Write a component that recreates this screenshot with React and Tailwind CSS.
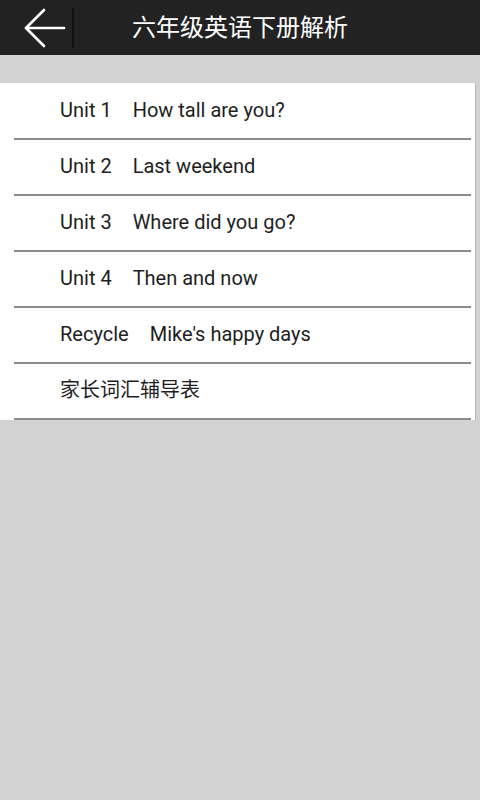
import React from 'react'

const items = [
  { unit: 'Unit 1', title: 'How tall are you?' },
  { unit: 'Unit 2', title: 'Last weekend' },
  { unit: 'Unit 3', title: 'Where did you go?' },
  { unit: 'Unit 4', title: 'Then and now' },
  { unit: 'Recycle', title: "Mike's happy days" },
  { unit: '家长词汇辅导表', title: '' },
]

export default function App() {
  return (
    <div className="w-[480px] h-[800px] bg-[#d2d2d2] flex flex-col font-['Roboto','Noto_Sans_CJK_SC',sans-serif] overflow-hidden">
      {/* Header */}
      <div className="relative h-[55px] bg-[#222222] flex items-center shrink-0">
        <div className="w-[72px] h-full flex items-center pl-[24px]">
          <svg width="42" height="40" viewBox="0 0 42 40" fill="none" stroke="white" strokeWidth="2.6" strokeLinecap="round" strokeLinejoin="round">
            <path d="M40 20H2" />
            <path d="M20 2L2 20L20 38" />
          </svg>
        </div>
        <div className="w-[2px] h-[40px] bg-[#0f0f0f]" />
        <div className="absolute inset-0 flex items-center justify-center text-white text-[24px] pointer-events-none">
          六年级英语下册解析
        </div>
      </div>

      <div className="h-[28px] shrink-0" />

      {/* List */}
      <div className="bg-white w-[476px] border-r border-[#b8b8b8] pt-[1px]">
        {items.map((item, i) => (
          <div key={i} className="ml-[14px] mr-[4px] h-[56px] border-b-2 border-[#8c8c8c] flex items-center pb-[3px]">
            <div className="pl-[46px] text-[20px] text-[#1e1e1e] flex items-center">
              <span>{item.unit}</span>
              {item.title && <span className="ml-[21px]">{item.title}</span>}
            </div>
          </div>
        ))}
      </div>
    </div>
  )
}
